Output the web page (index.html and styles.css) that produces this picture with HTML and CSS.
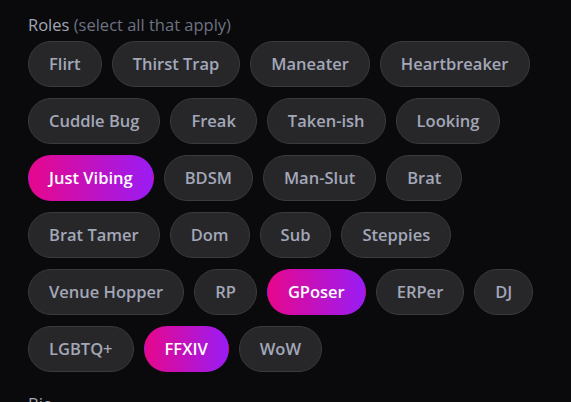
FILE: index.html
```html
<!DOCTYPE html>
<html lang="en">
<head>
<meta charset="utf-8">
<title>Roles</title>
<link rel="stylesheet" href="styles.css">
</head>
<body>
<div class="form">
  <div class="field">
    <div class="label">Roles <span class="hint">(select all that apply)</span></div>
    <div class="chips">
      <button class="chip">Flirt</button>
      <button class="chip">Thirst Trap</button>
      <button class="chip">Maneater</button>
      <button class="chip">Heartbreaker</button>
      <button class="chip">Cuddle Bug</button>
      <button class="chip">Freak</button>
      <button class="chip">Taken-ish</button>
      <button class="chip">Looking</button>
      <button class="chip selected">Just Vibing</button>
      <button class="chip">BDSM</button>
      <button class="chip">Man-Slut</button>
      <button class="chip">Brat</button>
      <button class="chip">Brat Tamer</button>
      <button class="chip">Dom</button>
      <button class="chip">Sub</button>
      <button class="chip">Steppies</button>
      <button class="chip">Venue Hopper</button>
      <button class="chip">RP</button>
      <button class="chip selected">GPoser</button>
      <button class="chip">ERPer</button>
      <button class="chip">DJ</button>
      <button class="chip">LGBTQ+</button>
      <button class="chip selected">FFXIV</button>
      <button class="chip">WoW</button>
    </div>
  </div>
  <div class="field next">
    <div class="label">Bio</div>
  </div>
</div>
</body>
</html>
```
FILE: styles.css
```css
html, body {
  margin: 0;
  padding: 0;
  background: #0a0a0c;
}
body {
  font-family: "Open Sans", "Noto Sans", sans-serif;
  overflow: hidden;
}
.form {
  padding: 15px 28px 0 28px;
}
.label {
  font-size: 16.5px;
  line-height: 20px;
  color: #a2a6b6;
  margin-bottom: 6px;
}
.hint {
  color: #6e7282;
}
.chips {
  display: flex;
  flex-wrap: wrap;
  gap: 11px 10px;
}
.chip {
  font-family: inherit;
  font-size: 16.5px;
  font-weight: 600;
  line-height: 22px;
  padding: 11px 20px;
  border: 1px solid #3a3a3f;
  background: #27272a;
  color: #a3a7b8;
  border-radius: 999px;
  cursor: pointer;
}
.chip.selected {
  background: linear-gradient(90deg, #e6078c, #9a1cf4);
  border-color: transparent;
  color: #ffffff;
}
.next {
  margin-top: 22px;
}
```
